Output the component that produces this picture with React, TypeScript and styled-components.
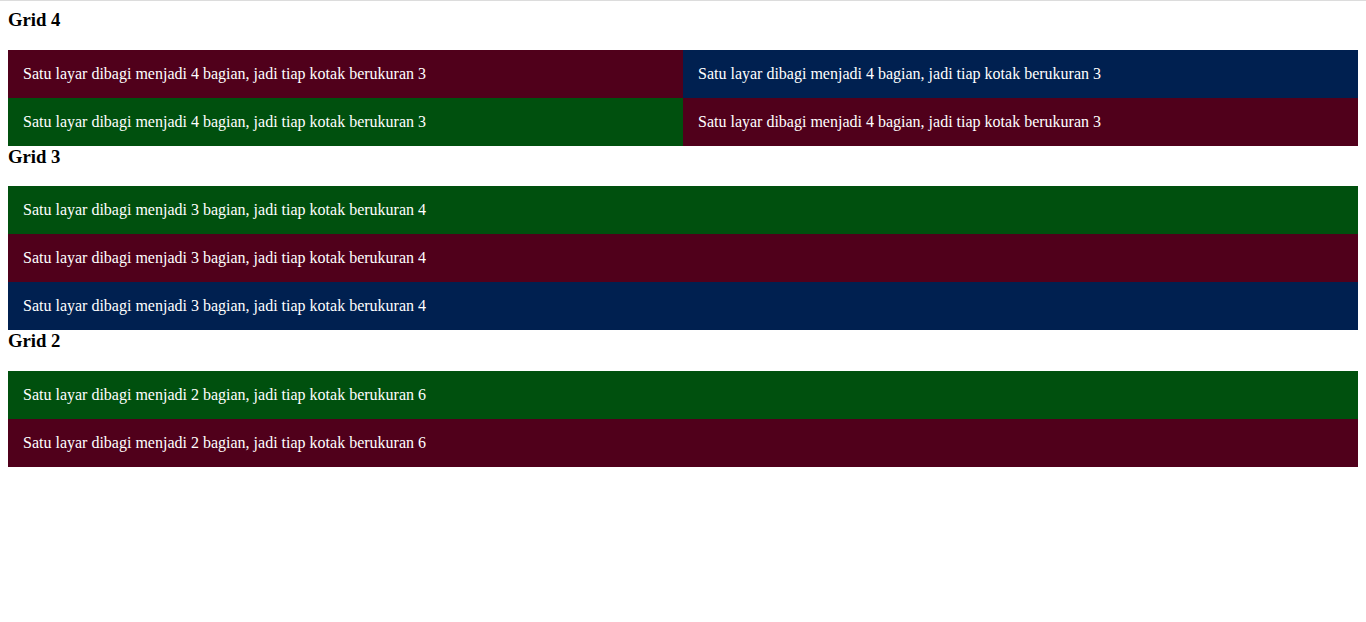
import React from "react";
import styled, { createGlobalStyle } from "styled-components";

const Global = createGlobalStyle`
  html { border-top: 1px solid #dcdcdc; }
  body {
    margin: 8px;
    font-family: "Liberation Serif", "Times New Roman", serif;
    font-size: 16px;
    background: #fff;
    color: #000;
  }
`;

const Heading = styled.h3`
  margin: 0 0 18.72px;
  font-size: 18.72px;
  font-weight: bold;
  line-height: normal;
`;

const Grid = styled.div<{ $cols: number }>`
  display: grid;
  grid-template-columns: repeat(${(p) => p.$cols}, 1fr);
`;

const palette = {
  maroon: "#50001b",
  green: "#00500e",
  navy: "#002050",
};

type Tone = keyof typeof palette;

const Box = styled.div<{ $tone: Tone }>`
  background: ${(p) => palette[p.$tone]};
  color: #fff;
  padding: 15px;
  line-height: 18px;
`;

const sections: { title: string; cols: number; n: number; size: number; tones: Tone[] }[] = [
  { title: "Grid 4", cols: 2, n: 4, size: 3, tones: ["maroon", "navy", "green", "maroon"] },
  { title: "Grid 3", cols: 1, n: 3, size: 4, tones: ["green", "maroon", "navy"] },
  { title: "Grid 2", cols: 1, n: 2, size: 6, tones: ["green", "maroon"] },
];

export default function App() {
  return (
    <>
      <Global />
      {sections.map((s) => (
        <section key={s.title}>
          <Heading>{s.title}</Heading>
          <Grid $cols={s.cols}>
            {s.tones.map((t, i) => (
              <Box key={i} $tone={t}>
                Satu layar dibagi menjadi {s.n} bagian, jadi tiap kotak berukuran {s.size}
              </Box>
            ))}
          </Grid>
        </section>
      ))}
    </>
  );
}
